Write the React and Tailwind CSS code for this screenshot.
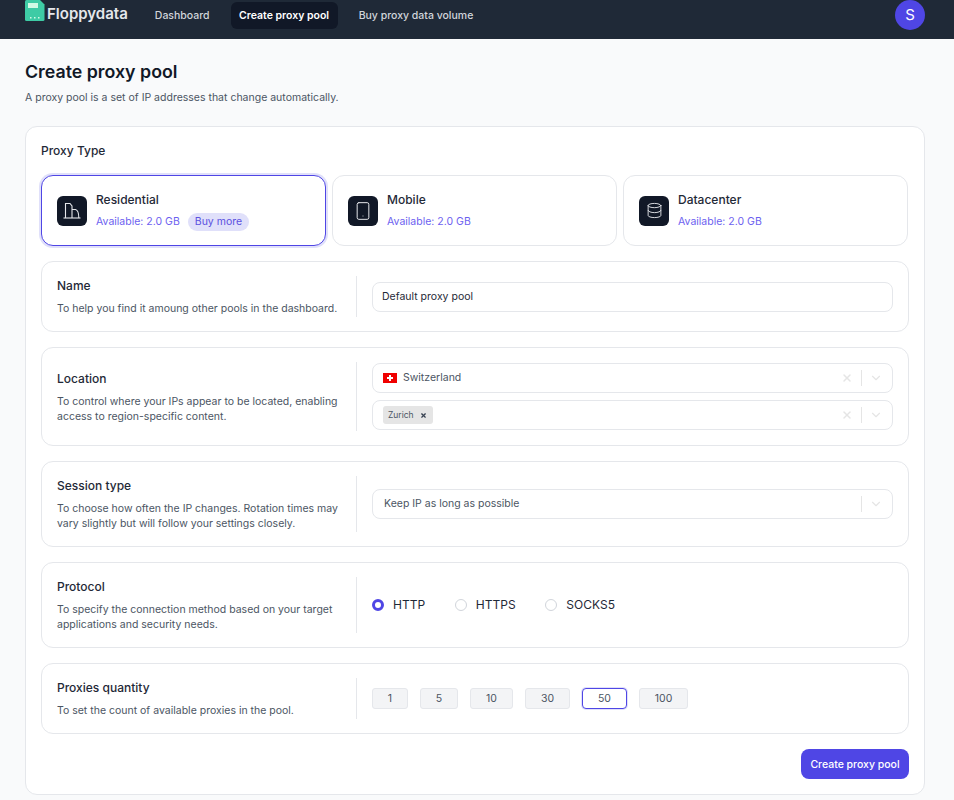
import React from 'react';
import { Database, Smartphone, X, ChevronDown } from 'lucide-react';

const FONT = { fontFamily: 'Inter, sans-serif' };

const ResidentialIcon = () => (
	<svg width="18" height="18" viewBox="0 0 18 18" fill="none" stroke="#e5e7eb" strokeWidth="1.1">
		<path d="M0.5 16H17.5" />
		<path d="M2.5 16V1.5H7L9 4V16" />
		<path d="M9 7.5H12.5C14.5 8 15.8 11 15.8 16" />
	</svg>
);

const SwissFlag = () => (
	<svg width="14" height="10" viewBox="0 0 14 10">
		<rect width="14" height="10" fill="#f00000" />
		<rect x="6" y="2" width="2" height="6" fill="#fff" />
		<rect x="4" y="4" width="6" height="2" fill="#fff" />
	</svg>
);

const TypeCard = ({ icon, title, active, more }) => (
	<div
		className={`flex-1 h-[71px] bg-white rounded-xl flex items-center gap-[9px] px-[15px] ${
			active ? 'border border-[#4f46e5] ring-2 ring-[#e0e0fa]' : 'border border-[#e5e7eb]'
		}`}>
		<div className="w-[30px] h-[30px] rounded-md bg-[#111827] flex items-center justify-center text-[#e5e7eb]">{icon}</div>
		<div className="pt-[2px]">
			<div className="text-[12px] leading-[16px] font-medium text-[#1f2937]">{title}</div>
			<div className="flex items-center gap-[8px] mt-[5px] h-[18px]">
				<span className="text-[10.5px] text-[#6d5ff0]">Available: 2.0 GB</span>
				{more && (
					<span className="text-[10.5px] leading-[18px] px-[7px] rounded-full bg-[#e0e0fa] text-[#5b50e0]">Buy more</span>
				)}
			</div>
		</div>
	</div>
);

const Section = ({ title, desc, height, leftPad, children }) => (
	<div className={`flex items-center bg-white border border-[#e5e7eb] rounded-xl px-[15px] ${height}`}>
		<div className={`w-[300px] shrink-0 h-[calc(100%-28px)] border-r border-[#e5e7eb] flex flex-col justify-center pr-[15px] ${leftPad || ''}`}>
			<div className="text-[12px] leading-[16px] font-medium text-[#1f2937]">{title}</div>
			<div className="text-[10.5px] leading-[15px] text-[#4b5563] mt-[7px]">{desc}</div>
		</div>
		<div className="flex-1 pl-[15px]">{children}</div>
	</div>
);

const SelectBox = ({ children, clear }) => (
	<div className="h-[30px] border border-[#e5e7eb] rounded-lg flex items-center pl-[10px] bg-white">
		<div className="flex-1 flex items-center">{children}</div>
		{clear && <X size={12} strokeWidth={3} className="text-[#e5e5e5] mr-[8px]" />}
		<div className="w-px h-[16px] bg-[#e5e5e5]" />
		<ChevronDown size={14} strokeWidth={2} className="text-[#e5e5e5] ml-[7px] mr-[9px]" />
	</div>
);

const Radio = ({ label, on }) => (
	<div className="flex items-center gap-[9px]">
		{on ? (
			<span className="w-[12px] h-[12px] rounded-full border-[3.5px] border-[#4f46e5] bg-white" />
		) : (
			<span className="w-[12px] h-[12px] rounded-full border border-[#d1d5db] bg-white" />
		)}
		<span className="text-[12px] text-[#1f2937]">{label}</span>
	</div>
);

const qty = [
	{ n: '1', w: 'w-[36px]' },
	{ n: '5', w: 'w-[38px]' },
	{ n: '10', w: 'w-[43px]' },
	{ n: '30', w: 'w-[45px]' },
	{ n: '50', w: 'w-[45px]', on: true },
	{ n: '100', w: 'w-[49px]' },
];

export default function App() {
	return (
		<div className="min-h-[800px] bg-[#f9fafb]" style={FONT}>
			<header className="h-[39px] bg-[#1f2937] flex items-start pl-[25px] pr-[29px]">
				<svg width="20" height="21" viewBox="0 0 20 21" className="shrink-0">
					<path d="M1.5 0H15L19.5 4.5V19.5Q19.5 21 18 21H1.5Q0 21 0 19.5V1.5Q0 0 1.5 0Z" fill="#3ecba5" />
					<rect x="3" y="3" width="10" height="5" fill="#d1fae5" />
					<rect x="5" y="17" width="1.5" height="1.5" fill="#d1fae5" />
					<rect x="9" y="17" width="1.5" height="1.5" fill="#d1fae5" />
					<rect x="13" y="17" width="1.5" height="1.5" fill="#d1fae5" />
				</svg>
				<span className="ml-[2px] mt-[3px] text-[15px] leading-[22px] font-semibold text-[#e5e7eb]">Floppydata</span>
				<nav className="flex ml-[18px] mt-[2px] text-[10.5px] font-medium">
					<span className="h-[26px] pt-px px-[9px] flex items-center text-[#d1d5db]">Dashboard</span>
					<span className="h-[27px] pt-px px-[8.5px] ml-[12px] flex items-center rounded-md bg-[#111827] text-white font-semibold">Create proxy pool</span>
					<span className="h-[26px] pt-px px-[9px] ml-[12px] flex items-center text-[#d1d5db]">Buy proxy data volume</span>
				</nav>
				<div className="ml-auto w-[30px] h-[30px] rounded-full bg-[#4f46e5] text-white flex items-center justify-center text-[15px]">S</div>
			</header>

			<main className="px-[25px]">
				<h1 className="text-[17.8px] leading-[24px] font-semibold text-[#111827] mt-[21px]">Create proxy pool</h1>
				<p className="text-[10.5px] leading-[16px] text-[#4b5563] mt-[6px]">A proxy pool is a set of IP addresses that change automatically.</p>

				<div className="mt-[20px] w-[900px] bg-white border border-[#e5e7eb] rounded-xl px-[15px] pt-[16px] pb-[15px]">
					<div className="text-[12px] leading-[16px] font-medium text-[#1f2937]">Proxy Type</div>
					<div className="flex gap-[6px] mt-[16px] pr-px">
						<TypeCard active more title="Residential" icon={<ResidentialIcon />} />
						<TypeCard title="Mobile" icon={<Smartphone size={20} strokeWidth={1.2} />} />
						<TypeCard title="Datacenter" icon={<Database size={17} strokeWidth={1.3} />} />
					</div>

					<div className="flex flex-col gap-[15px] mt-[15px]">
						<Section height="h-[71px]" title="Name" desc="To help you find it amoung other pools in the dashboard.">
							<div className="h-[30px] border border-[#e5e7eb] rounded-lg flex items-center px-[9px] text-[10.5px] text-[#1f2937]">Default proxy pool</div>
						</Section>

						<Section
							height="h-[99px]"
							leftPad="pt-[2px]"
							title="Location"
							desc="To control where your IPs appear to be located, enabling access to region-specific content.">
							<div className="flex flex-col gap-[7px]">
								<SelectBox clear>
									<SwissFlag />
									<span className="ml-[6px] text-[10.5px] text-[#4b5563]">Switzerland</span>
								</SelectBox>
								<SelectBox clear>
									<span className="h-[18px] rounded-[3px] bg-[#e5e5e5] flex items-center pl-[5px] pr-[5.5px] gap-[6.5px] text-[8.5px] text-[#4b5563]">
										Zurich
										<X size={7} strokeWidth={4} className="text-[#374151]" />
									</span>
								</SelectBox>
							</div>
						</Section>

						<Section
							height="h-[86px]"
							title="Session type"
							desc="To choose how often the IP changes. Rotation times may vary slightly but will follow your settings closely.">
							<SelectBox>
								<span className="ml-px text-[10.5px] text-[#4b5563]">Keep IP as long as possible</span>
							</SelectBox>
						</Section>

						<Section
							height="h-[86px]"
							title="Protocol"
							desc="To specify the connection method based on your target applications and security needs.">
							<div className="flex gap-[29.75px]">
								<Radio on label="HTTP" />
								<Radio label="HTTPS" />
								<Radio label="SOCKS5" />
							</div>
						</Section>

						<Section height="h-[71px]" title="Proxies quantity" desc="To set the count of available proxies in the pool.">
							<div className="flex gap-[12px]">
								{qty.map((q) => (
									<div
										key={q.n}
										className={`${q.w} h-[21px] rounded-[3px] flex items-center justify-center text-[10.5px] text-[#4b5563] ${
											q.on ? 'border border-[#4f46e5] ring-1 ring-[#e0e0fa] rounded-[4px] bg-white' : 'border border-[#e5e7eb] bg-[#f3f4f6]'
										}`}>
										{q.n}
									</div>
								))}
							</div>
						</Section>
					</div>

					<div className="flex justify-end mt-[15px]">
						<button className="w-[108px] h-[30px] pt-px rounded-lg bg-[#4f46e5] text-white text-[10.5px] font-medium">Create proxy pool</button>
					</div>
				</div>
			</main>
		</div>
	);
}
